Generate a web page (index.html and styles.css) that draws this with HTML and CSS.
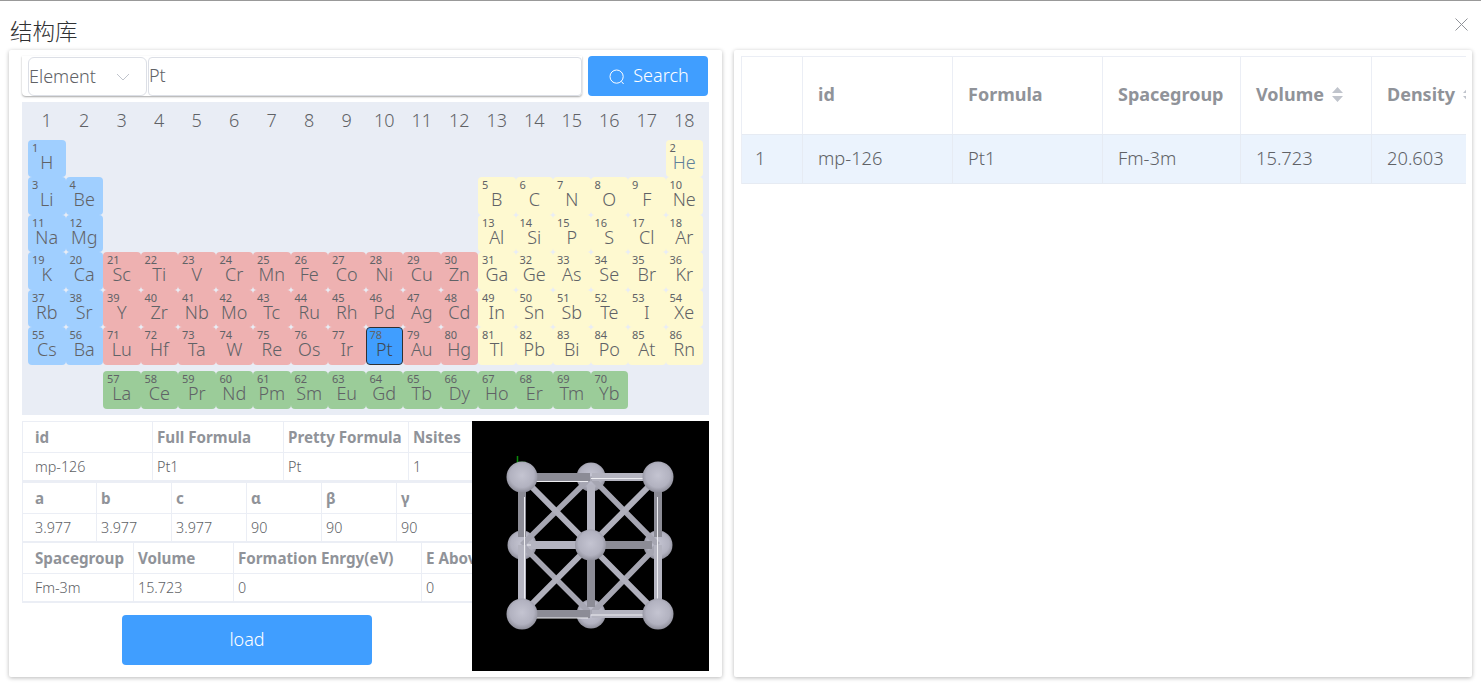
FILE: index.html
```html
<!DOCTYPE html>
<html lang="zh">
<head>
<meta charset="utf-8">
<title>结构库</title>
<link rel="stylesheet" href="styles.css">
</head>
<body>
<div class="dialog">
  <header class="head">
    <h1 class="title">结构库</h1>
    <svg class="close" viewBox="0 0 13 13"><path d="M.5.5l12 12M12.5.5l-12 12"/></svg>
  </header>
  <main class="cards">
    <section class="card left">
      <div class="searchrow">
        <div class="searchbox">
          <div class="select"><span>Element</span><svg class="chev" viewBox="0 0 14 8"><path d="M1 1l6 6 6-6"/></svg></div>
          <div class="input">Pt</div>
        </div>
        <div class="btn-search"><svg class="mag" viewBox="0 0 16 16"><circle cx="7.6" cy="7.6" r="6.6"/><path d="M12.4 12.4l2.2 2.6"/></svg><span>Search</span></div>
      </div>
      <div class="ptable">
        <div class="labels"><span>1</span><span>2</span><span>3</span><span>4</span><span>5</span><span>6</span><span>7</span><span>8</span><span>9</span><span>10</span><span>11</span><span>12</span><span>13</span><span>14</span><span>15</span><span>16</span><span>17</span><span>18</span></div>
        <div class="grid">
          <div class="el blue"><b>1</b><span>H</span></div><i class="gap16"></i><div class="el yellow he"><b>2</b><span>He</span></div>
          <div class="el blue"><b>3</b><span>Li</span></div><div class="el blue"><b>4</b><span>Be</span></div><i class="gap10"></i><div class="el yellow"><b>5</b><span>B</span></div><div class="el yellow"><b>6</b><span>C</span></div><div class="el yellow"><b>7</b><span>N</span></div><div class="el yellow"><b>8</b><span>O</span></div><div class="el yellow"><b>9</b><span>F</span></div><div class="el yellow"><b>10</b><span>Ne</span></div>
          <div class="el blue"><b>11</b><span>Na</span></div><div class="el blue"><b>12</b><span>Mg</span></div><i class="gap10"></i><div class="el yellow"><b>13</b><span>Al</span></div><div class="el yellow"><b>14</b><span>Si</span></div><div class="el yellow"><b>15</b><span>P</span></div><div class="el yellow"><b>16</b><span>S</span></div><div class="el yellow"><b>17</b><span>Cl</span></div><div class="el yellow"><b>18</b><span>Ar</span></div>
          <div class="el blue"><b>19</b><span>K</span></div><div class="el blue"><b>20</b><span>Ca</span></div><div class="el red"><b>21</b><span>Sc</span></div><div class="el red"><b>22</b><span>Ti</span></div><div class="el red"><b>23</b><span>V</span></div><div class="el red"><b>24</b><span>Cr</span></div><div class="el red"><b>25</b><span>Mn</span></div><div class="el red"><b>26</b><span>Fe</span></div><div class="el red"><b>27</b><span>Co</span></div><div class="el red"><b>28</b><span>Ni</span></div><div class="el red"><b>29</b><span>Cu</span></div><div class="el red"><b>30</b><span>Zn</span></div><div class="el yellow"><b>31</b><span>Ga</span></div><div class="el yellow"><b>32</b><span>Ge</span></div><div class="el yellow"><b>33</b><span>As</span></div><div class="el yellow"><b>34</b><span>Se</span></div><div class="el yellow"><b>35</b><span>Br</span></div><div class="el yellow"><b>36</b><span>Kr</span></div>
          <div class="el blue"><b>37</b><span>Rb</span></div><div class="el blue"><b>38</b><span>Sr</span></div><div class="el red"><b>39</b><span>Y</span></div><div class="el red"><b>40</b><span>Zr</span></div><div class="el red"><b>41</b><span>Nb</span></div><div class="el red"><b>42</b><span>Mo</span></div><div class="el red"><b>43</b><span>Tc</span></div><div class="el red"><b>44</b><span>Ru</span></div><div class="el red"><b>45</b><span>Rh</span></div><div class="el red"><b>46</b><span>Pd</span></div><div class="el red"><b>47</b><span>Ag</span></div><div class="el red"><b>48</b><span>Cd</span></div><div class="el yellow"><b>49</b><span>In</span></div><div class="el yellow"><b>50</b><span>Sn</span></div><div class="el yellow"><b>51</b><span>Sb</span></div><div class="el yellow"><b>52</b><span>Te</span></div><div class="el yellow"><b>53</b><span>I</span></div><div class="el yellow"><b>54</b><span>Xe</span></div>
          <div class="el blue"><b>55</b><span>Cs</span></div><div class="el blue"><b>56</b><span>Ba</span></div><div class="el red"><b>71</b><span>Lu</span></div><div class="el red"><b>72</b><span>Hf</span></div><div class="el red"><b>73</b><span>Ta</span></div><div class="el red"><b>74</b><span>W</span></div><div class="el red"><b>75</b><span>Re</span></div><div class="el red"><b>76</b><span>Os</span></div><div class="el red"><b>77</b><span>Ir</span></div><div class="el selected"><b>78</b><span>Pt</span></div><div class="el red"><b>79</b><span>Au</span></div><div class="el red"><b>80</b><span>Hg</span></div><div class="el yellow"><b>81</b><span>Tl</span></div><div class="el yellow"><b>82</b><span>Pb</span></div><div class="el yellow"><b>83</b><span>Bi</span></div><div class="el yellow"><b>84</b><span>Po</span></div><div class="el yellow"><b>85</b><span>At</span></div><div class="el yellow"><b>86</b><span>Rn</span></div>
        </div>
        <div class="grid lanth">
          <i class="gap2"></i><div class="el green"><b>57</b><span>La</span></div><div class="el green"><b>58</b><span>Ce</span></div><div class="el green"><b>59</b><span>Pr</span></div><div class="el green"><b>60</b><span>Nd</span></div><div class="el green"><b>61</b><span>Pm</span></div><div class="el green"><b>62</b><span>Sm</span></div><div class="el green"><b>63</b><span>Eu</span></div><div class="el green"><b>64</b><span>Gd</span></div><div class="el green"><b>65</b><span>Tb</span></div><div class="el green"><b>66</b><span>Dy</span></div><div class="el green"><b>67</b><span>Ho</span></div><div class="el green"><b>68</b><span>Er</span></div><div class="el green"><b>69</b><span>Tm</span></div><div class="el green"><b>70</b><span>Yb</span></div>
        </div>
      </div>
      <div class="details">
        <div class="info">
          <div class="ft ft1 first">
            <div class="th">id</div><div class="th">Full Formula</div><div class="th">Pretty Formula</div><div class="th">Nsites</div>
            <div class="td">mp-126</div><div class="td">Pt1</div><div class="td">Pt</div><div class="td">1</div>
          </div>
          <div class="ft ft2">
            <div class="th">a</div><div class="th">b</div><div class="th">c</div><div class="th">α</div><div class="th">β</div><div class="th">γ</div>
            <div class="td">3.977</div><div class="td">3.977</div><div class="td">3.977</div><div class="td">90</div><div class="td">90</div><div class="td">90</div>
          </div>
          <div class="ft ft3">
            <div class="th">Spacegroup</div><div class="th">Volume</div><div class="th">Formation Enrgy(eV)</div><div class="th">E Above Hull</div>
            <div class="td">Fm-3m</div><div class="td">15.723</div><div class="td">0</div><div class="td">0</div>
          </div>
          <div class="loadwrap"><div class="btn-load">load</div></div>
        </div>
        <svg class="viewer" viewBox="0 0 237 250">
          <defs>
            <radialGradient id="atom" cx="0.5" cy="0.45" r="0.55">
              <stop offset="0" stop-color="#c4c4d1"/>
              <stop offset="0.7" stop-color="#b2b2c0"/>
              <stop offset="1" stop-color="#8e8e9a"/>
            </radialGradient>
          </defs>
          <path class="axis" d="M45.500 35v8M45 41.500h9"/>
          <g class="soft">
            <circle class="atom" cx="119" cy="56" r="14.5"/>
            <circle class="atom" cx="50" cy="124" r="14.5"/>
            <circle class="atom" cx="186" cy="124" r="14.5"/>
            <circle class="atom" cx="119" cy="193" r="14.5"/>
            <path class="bond-mid" d="M119 56L50 124M119 56L186 124M50 124L119 193M186 124L119 193"/>
            <path class="bond-dark" d="M60 56h58M60 193h58M50 66v50M186 66v50M119 124v62M119 124h61"/>
            <path class="bond-light" d="M120 56h56M120 193h56M57 124h62M50 124v60M186 124v60M119 64v60"/>
            <path class="bond-diag" d="M50 56L186 193M186 56L50 193"/>
            <path class="shine" d="M119 57.500h55M119 194h55M62 60.500h54M62 197h54M52.500 76v104M185.500 76v104M55 124h4"/>
            <circle class="atom" cx="50" cy="56" r="15.5"/>
            <circle class="atom" cx="186" cy="56" r="15.5"/>
            <circle class="atom" cx="118.500" cy="124" r="15.500"/>
            <circle class="atom" cx="50" cy="193" r="15.5"/>
            <circle class="atom" cx="186" cy="193" r="15.5"/>
          </g>
        </svg>
      </div>
    </section>
    <section class="card right">
      <div class="rtable">
        <div class="rrow rhead">
          <div class="rc"></div><div class="rc">id</div><div class="rc">Formula</div><div class="rc">Spacegroup</div>
          <div class="rc">Volume<svg class="sort" viewBox="0 0 11 15"><path d="M5.500 0L11 6H0zM5.500 15L0 9h11z"/></svg></div>
          <div class="rc">Density<svg class="sort" viewBox="0 0 11 15"><path d="M5.500 0L11 6H0zM5.500 15L0 9h11z"/></svg></div>
        </div>
        <div class="rrow rbody">
          <div class="rc num">1</div><div class="rc">mp-126</div><div class="rc">Pt1</div><div class="rc">Fm-3m</div><div class="rc">15.723</div><div class="rc">20.603</div>
        </div>
      </div>
    </section>
  </main>
</div>
</body>
</html>
```

FILE: styles.css
```css
* { box-sizing: border-box; }
html, body { margin: 0; height: 683px; overflow: hidden; background: #fff; }
body { font-family: "Noto Sans", "Noto Sans CJK SC", sans-serif; font-weight: 350; color: #606266; }

.dialog { height: 683px; border-top: 1px solid #999; display: flex; flex-direction: column; }
.head { height: 49px; flex: none; display: flex; justify-content: space-between; padding: 0 13px 0 10px; }
.title { margin: 14px 0 0; font: 300 22.500px/30px "Noto Sans CJK SC", sans-serif; color: #303133; }
.close { width: 13px; height: 13px; margin-top: 17px; fill: none; stroke: #909399; stroke-width: 1; }

.cards { flex: none; height: 627px; display: flex; gap: 12px; padding: 0 9px; }
.card { background: #fff; box-shadow: 0 1px 4px rgba(0, 0, 0, .28); border-radius: 2px; }
.left { width: 713px; padding: 6px 13px 0; }
.right { width: 738px; padding: 6px 7px 0; }

.searchrow { display: flex; gap: 6px; height: 40px; }
.searchbox { width: 560px; display: flex; gap: 1px; padding: 1px 0 0 6px; background: #fff; box-shadow: 0 1px 2px rgba(0, 0, 0, .35); border-radius: 0 0 4px 4px; }
.select { width: 119px; height: 39px; flex: none; border: 1px solid #dcdfe6; border-radius: 6px; display: flex; align-items: center; justify-content: space-between; padding: 0 16px 2px 0; font-size: 18px; }
.chev { width: 14px; height: 8px; fill: none; stroke: #c0c4cc; stroke-width: 1; margin-top: 2px; }
.input { flex: 1; height: 39px; border: 1px solid #dcdfe6; border-radius: 4px; font-size: 18px; line-height: 35px; }
.btn-search { width: 120px; height: 40px; background: #409eff; border-radius: 4px; color: #fff; font-size: 18px; display: flex; align-items: center; justify-content: center; gap: 8px; padding: 0 0 2px 2px; }
.mag { width: 16px; height: 16px; fill: none; stroke: #fff; stroke-width: 1; margin-top: 4px; }

.ptable { margin-top: 6px; height: 313px; background: #e9edf5; padding: 0 6px; }
.labels { height: 37.750px; display: grid; grid-template-columns: repeat(18, 37.5px); font-size: 18px; line-height: 36px; text-align: center; }
.grid { display: grid; grid-template-columns: repeat(18, 37.5px); grid-auto-rows: 37.5px; }
.lanth { margin-top: 6.250px; }
.gap16 { grid-column: span 16; }
.gap10 { grid-column: span 10; }
.gap2 { grid-column: span 2; }

.el { border-radius: 4px; }
.el b { display: block; font-weight: 400; font-size: 11px; line-height: 12px; margin-top: 2px; padding-left: 4px; }
.el span { display: block; font-size: 18px; line-height: 17px; text-align: center; }
.blue { background: #a0cfff; }
.red { background: #eeb1b1; }
.yellow { background: #fef9d0; }
.green { background: #9bcc99; }
.he span { color: #5f7f99; }
.selected { background: #409eff; border: 1px solid #303133; }
.selected b { margin-top: 1px; padding-left: 3px; }
.selected span { color: #3f4a55; }

.details { margin-top: 6px; display: flex; height: 250px; }
.info { width: 450px; flex: none; overflow: hidden; }
.viewer { width: 237px; height: 250px; flex: none; background: #000; display: block; }

.ft { display: grid; width: 620px; font-size: 14.300px; border-left: 1px solid #ebeef5; border-bottom: 2px solid #ebeef5; }
.first { border-top: 1px solid #ebeef5; border-bottom-width: 3px; }
.ft1 { grid-template-columns: 130px 131px 125px 1fr; }
.ft2 { grid-template-columns: 74px 75px 75px 75px 75px 75px 1fr; }
.ft3 { grid-template-columns: 111px 100px 188px 1fr; }
.ft2 .th:nth-child(6), .ft2 .td:nth-child(12) { grid-column: span 2; }
.th, .td { padding-left: 4px; border-right: 1px solid #ebeef5; white-space: nowrap; overflow: hidden; }
.th { height: 31px; border-bottom: 1px solid #ebeef5; font-size: 15.200px; font-weight: 700; color: #909399; line-height: 31px; }
.td { height: 27px; line-height: 27px; }
.th:first-child, .ft1 .td:nth-child(5), .ft2 .td:nth-child(7), .ft3 .td:nth-child(5) { padding-left: 12px; }

.loadwrap { padding: 12px 0 0 100px; }
.btn-load { width: 250px; height: 50px; background: #409eff; border-radius: 4px; color: #fff; font-size: 18px; line-height: 48px; text-align: center; }

.atom { fill: url(#atom); }
.axis { fill: none; stroke: #0a8a0a; stroke-width: 1.500; }
.soft { filter: blur(.4px); }
.bond-mid { fill: none; stroke: #a6a6b2; stroke-width: 5.500; }
.bond-dark { fill: none; stroke: #8c8c96; stroke-width: 8; }
.bond-light { fill: none; stroke: #b4b4c0; stroke-width: 8; }
.bond-diag { fill: none; stroke: #b0b0bc; stroke-width: 6; }
.shine { fill: none; stroke: #eeeef2; stroke-width: 1; }

.rtable { width: 725px; overflow: hidden; border-top: 1px solid #ebeef5; border-left: 1px solid #ebeef5; font-size: 18.300px; }
.rrow { display: grid; grid-template-columns: 61px 150px 150px 138px 131px 130px; width: 760px; }
.rhead { height: 77px; font-size: 18px; font-weight: 700; color: #909399; }
.rbody { height: 50px; background: #ebf3fd; border-top: 1px solid #e6ebf3; border-bottom: 1px solid #e6ebf3; }
.rc { display: flex; align-items: center; padding: 0 0 3px 15px; border-right: 1px solid #ebeef5; white-space: nowrap; }
.rbody .rc { border-right-color: #e6ebf3; }
.rc.num { padding-left: 13px; }
.sort { width: 11px; height: 15px; margin-left: 8px; fill: #c0c4cc; flex: none; }
```
